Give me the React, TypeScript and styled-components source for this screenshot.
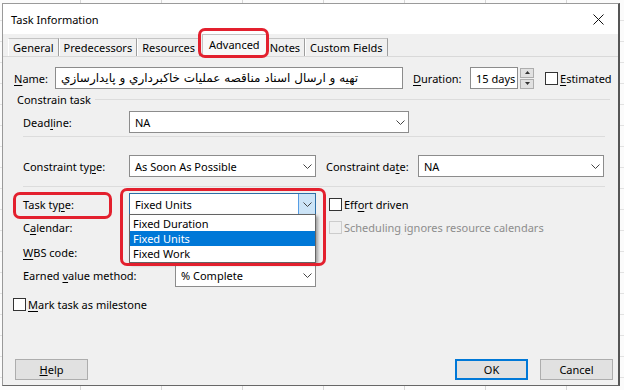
import React from 'react';
import styled, { createGlobalStyle } from 'styled-components';

const GlobalStyle = createGlobalStyle`
  html, body {
    margin: 0;
    padding: 0;
  }
  body {
    width: 624px;
    height: 390px;
    overflow: hidden;
    font-family: 'Noto Sans', 'DejaVu Sans', sans-serif;
    font-size: 11px;
    color: #000;
  }
  * {
    box-sizing: border-box;
  }
`;

const Desktop = styled.div`
  width: 624px;
  height: 390px;
  overflow: hidden;
  padding: 3px 0 0 2px;
  background-color: #fbfbfb;
  background-image:
    repeating-linear-gradient(90deg, transparent 0 80px, #d6d6d6 80px 81px),
    repeating-linear-gradient(180deg, transparent 0 20px, #e2e2e2 20px 21px);
`;

const Dialog = styled.div`
  position: relative;
  width: 618px;
  height: 383px;
  display: flex;
  flex-direction: column;
  border: 1px solid #9a9a9a;
  border-right: 2px solid #555;
  border-bottom: 1px solid #666;
  background: #f0f0f0;
`;

const TitleBar = styled.div`
  height: 30px;
  display: flex;
  align-items: center;
  justify-content: space-between;
  background: #fff;
  padding-left: 8px;
  font-size: 11px;
`;

const CloseButton = styled.div`
  width: 30px;
  height: 30px;
  display: flex;
  align-items: center;
  justify-content: center;
  margin-right: 5px;
`;

const TabStrip = styled.div`
  height: 22px;
  display: flex;
  align-items: flex-end;
  padding-left: 5px;
`;

const Tab = styled.div<{ $active?: boolean }>`
  position: relative;
  height: ${({ $active }) => ($active ? '22px' : '18px')};
  display: flex;
  align-items: center;
  padding: ${({ $active }) => ($active ? '0 6px 2px' : '0 4px')};
  margin: ${({ $active }) => ($active ? '0 -2px 0 2px' : '0')};
  background: ${({ $active }) => ($active ? '#f9f9f9' : '#f0f0f0')};
  border: 1px solid #c4c4c4;
  border-left-color: ${({ $active }) => ($active ? '#c4c4c4' : '#fff')};
  border-right-color: #9e9e9e;
  border-bottom: none;
  z-index: ${({ $active }) => ($active ? 1 : 0)};
  white-space: nowrap;
`;

const Highlight = styled.div<{ $top: number; $left: number; $w: number; $h: number }>`
  position: absolute;
  top: ${({ $top }) => $top}px;
  left: ${({ $left }) => $left}px;
  width: ${({ $w }) => $w}px;
  height: ${({ $h }) => $h}px;
  border: 3px solid #e3202e;
  border-radius: 7px;
  pointer-events: none;
  z-index: 5;
`;

const Panel = styled.div`
  flex: 1;
  display: flex;
  flex-direction: column;
  border-top: 1px solid #d9d9d9;
`;

const Row = styled.div<{ $mt: number; $ml: number; $h?: number }>`
  display: flex;
  align-items: center;
  height: ${({ $h }) => $h ?? 22}px;
  margin-top: ${({ $mt }) => $mt}px;
  margin-left: ${({ $ml }) => $ml}px;
`;

const Label = styled.span<{ $w?: number; $ml?: number; $disabled?: boolean }>`
  position: relative;
  flex: none;
  width: ${({ $w }) => ($w ? `${$w}px` : 'auto')};
  margin-left: ${({ $ml }) => $ml ?? 0}px;
  color: ${({ $disabled }) => ($disabled ? '#8d8d8d' : '#000')};
  white-space: nowrap;
  u {
    text-underline-offset: 2px;
  }
`;

const Field = styled.div<{ $w: number; $focus?: boolean }>`
  position: relative;
  flex: none;
  width: ${({ $w }) => $w}px;
  height: 22px;
  display: flex;
  align-items: center;
  justify-content: space-between;
  padding-left: 5px;
  background: #fff;
  border: 1px solid ${({ $focus }) => ($focus ? '#2c6ea6' : '#8c8c8c')};
  white-space: nowrap;
`;

const ArabicText = styled.span`
  font-family: 'DejaVu Sans', 'Noto Sans', sans-serif;
  font-size: 12px;
`;

const ChevronBox = styled.div<{ $pressed?: boolean }>`
  width: 17px;
  height: 100%;
  display: flex;
  align-items: center;
  justify-content: center;
  background: ${({ $pressed }) => ($pressed ? '#cce4f7' : 'transparent')};
  border-left: 1px solid ${({ $pressed }) => ($pressed ? '#569de5' : 'transparent')};
`;

const Spinner = styled.div`
  width: 14px;
  height: 21px;
  margin-left: 2px;
  display: flex;
  flex-direction: column;
  gap: 1px;
`;

const SpinButton = styled.div`
  flex: 1;
  display: flex;
  align-items: center;
  justify-content: center;
  background: #e1e1e1;
  border: 1px solid #adadad;
`;

const CheckBox = styled.div<{ $ml?: number; $disabled?: boolean }>`
  flex: none;
  width: 13px;
  height: 13px;
  margin-left: ${({ $ml }) => $ml ?? 0}px;
  margin-right: 2px;
  background: ${({ $disabled }) => ($disabled ? '#f0f0f0' : '#fff')};
  border: 1px solid ${({ $disabled }) => ($disabled ? '#cccccc' : '#333')};
`;

const GroupHeader = styled.div`
  display: flex;
  align-items: center;
  height: 14px;
  margin: 3px 8px 0 14px;
  gap: 4px;
  &::after {
    content: '';
    flex: 1;
    height: 1px;
    background: #dcdcdc;
  }
`;

const Separator = styled.div<{ $mt: number }>`
  width: 582px;
  height: 1px;
  margin: ${({ $mt }) => $mt}px 0 0 20px;
  background: #dcdcdc;
`;

const DropList = styled.div`
  position: absolute;
  top: 20px;
  left: -1px;
  width: 187px;
  padding: 1px 0;
  background: #fff;
  border: 1px solid #646464;
  box-shadow: 2px 2px 3px rgba(0, 0, 0, 0.35);
  z-index: 4;
`;

const DropItem = styled.div<{ $selected?: boolean }>`
  height: 15px;
  display: flex;
  align-items: center;
  padding-left: 3px;
  background: ${({ $selected }) => ($selected ? '#0078d7' : 'transparent')};
  color: ${({ $selected }) => ($selected ? '#fff' : '#000')};
`;

const ButtonBar = styled.div`
  display: flex;
  align-items: center;
  margin-top: auto;
  margin-bottom: 5px;
  padding: 0 5px 0 12px;
`;

const Button = styled.div<{ $default?: boolean; $ml?: string }>`
  width: 73px;
  height: 21px;
  display: flex;
  align-items: center;
  justify-content: center;
  margin-left: ${({ $ml }) => $ml ?? '0'};
  background: #e1e1e1;
  border: 1px solid ${({ $default }) => ($default ? '#0078d7' : '#adadad')};
  box-shadow: ${({ $default }) => ($default ? 'inset 0 0 0 1px #0078d7' : 'none')};
`;

const Chevron = () => (
  <svg width="9" height="5" viewBox="0 0 9 5">
    <polyline points="0.5,0.5 4.5,4.5 8.5,0.5" fill="none" stroke="#444" strokeWidth="1" />
  </svg>
);

const Triangle = ({ up }: { up?: boolean }) => (
  <svg width="5" height="3" viewBox="0 0 5 3">
    <polygon points={up ? '0,3 5,3 2.5,0' : '0,0 5,0 2.5,3'} fill="#333" />
  </svg>
);

const Select = ({ w, value, pressed, focus, children }: {
  w: number;
  value?: string;
  pressed?: boolean;
  focus?: boolean;
  children?: React.ReactNode;
}) => (
  <Field $w={w} $focus={focus}>
    <span>{value}</span>
    <ChevronBox $pressed={pressed}>
      <Chevron />
    </ChevronBox>
    {children}
  </Field>
);

const tabs = ['General', 'Predecessors', 'Resources', 'Advanced', 'Notes', 'Custom Fields'];

export default function App() {
  return (
    <Desktop>
      <GlobalStyle />
      <Dialog>
        <TitleBar>
          <span>Task Information</span>
          <CloseButton>
            <svg width="11" height="11" viewBox="0 0 11 11">
              <path d="M0.5 0.5 L10.5 10.5 M10.5 0.5 L0.5 10.5" stroke="#111" strokeWidth="1" />
            </svg>
          </CloseButton>
        </TitleBar>

        <TabStrip>
          {tabs.map((t) => (
            <Tab key={t} $active={t === 'Advanced'}>
              {t}
              {t === 'Advanced' && <Highlight $top={-7} $left={-5} $w={71} $h={30} />}
            </Tab>
          ))}
        </TabStrip>

        <Panel>
          <Row $mt={10} $ml={11}>
            <Label $w={41}><u>N</u>ame:</Label>
            <Field $w={348}>
              <ArabicText>تهیه و ارسال اسناد مناقصه عملیات خاکبرداري و پایدارسازي</ArabicText>
            </Field>
            <Label $w={57} $ml={10}><u>D</u>uration:</Label>
            <Field $w={48}>15 days</Field>
            <Spinner>
              <SpinButton><Triangle up /></SpinButton>
              <SpinButton><Triangle /></SpinButton>
            </Spinner>
            <CheckBox $ml={11} />
            <Label><u>E</u>stimated</Label>
          </Row>

          <GroupHeader>Constrain task</GroupHeader>

          <Row $mt={5} $ml={20}>
            <Label $w={106}>Dead<u>l</u>ine:</Label>
            <Select w={280} value="NA" />
          </Row>

          <Separator $mt={3} />

          <Row $mt={18} $ml={20}>
            <Label $w={106}>Constraint ty<u>p</u>e:</Label>
            <Select w={187} value="As Soon As Possible" />
            <Label $w={92} $ml={10}>Constraint da<u>t</u>e:</Label>
            <Select w={186} value="NA" />
          </Row>

          <Separator $mt={9} />

          <Row $mt={6} $ml={20}>
            <Label $w={106}>
              Task ty<u>p</u>e:
              <Highlight $top={-5} $left={-10} $w={99} $h={27} />
            </Label>
            <Select w={187} value="Fixed Units" pressed focus>
              <Highlight $top={-6} $left={-10} $w={206} $h={78} />
              <DropList>
                <DropItem>Fixed Duration</DropItem>
                <DropItem $selected>Fixed Units</DropItem>
                <DropItem>Fixed Work</DropItem>
              </DropList>
            </Select>
            <CheckBox $ml={13} />
            <Label>Eff<u>o</u>rt driven</Label>
          </Row>

          <Row $mt={1} $ml={20}>
            <Label $w={106}>C<u>a</u>lendar:</Label>
            <Select w={187} />
            <CheckBox $ml={13} $disabled />
            <Label $disabled>Schedulin<u>g</u> ignores resource calendars</Label>
          </Row>

          <Row $mt={3} $ml={20}>
            <Label $w={106}><u>W</u>BS code:</Label>
            <Field $w={187} />
          </Row>

          <Row $mt={2} $ml={20} $h={21}>
            <Label $w={152}>Earned <u>v</u>alue method:</Label>
            <Select w={141} value="% Complete" />
          </Row>

          <Row $mt={11} $ml={10} $h={14}>
            <CheckBox />
            <Label><u>M</u>ark task as milestone</Label>
          </Row>

          <ButtonBar>
            <Button><span><u>H</u>elp</span></Button>
            <Button $default $ml="auto">OK</Button>
            <Button $ml="12px">Cancel</Button>
          </ButtonBar>
        </Panel>
      </Dialog>
    </Desktop>
  );
}
